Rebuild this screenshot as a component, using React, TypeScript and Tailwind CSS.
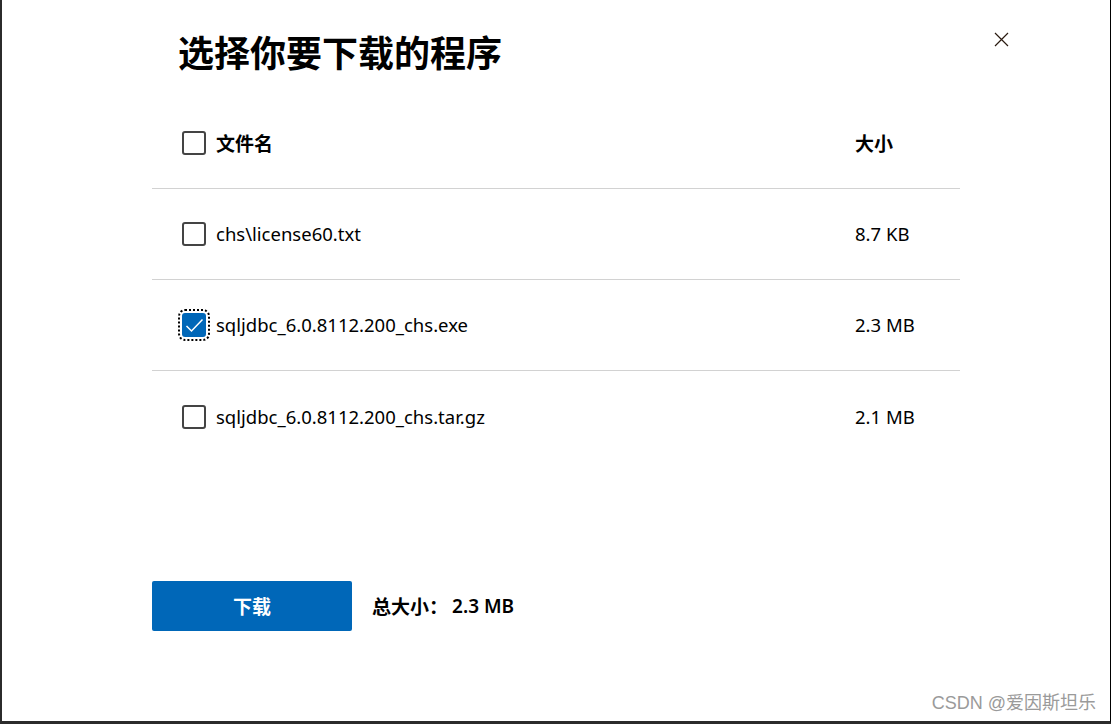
import React from 'react';

const files = [
  { name: 'chs\\license60.txt', size: '8.7 KB', checked: false },
  { name: 'sqljdbc_6.0.8112.200_chs.exe', size: '2.3 MB', checked: true },
  { name: 'sqljdbc_6.0.8112.200_chs.tar.gz', size: '2.1 MB', checked: false },
];

const font = { fontFamily: '"Noto Sans", "Noto Sans CJK SC", sans-serif' };
const cjk = { fontFamily: '"Noto Sans CJK SC", sans-serif' };

const Box = ({ checked }: { checked: boolean }) => {
  if (checked) {
    return (
      <span className="relative flex h-[24px] w-[24px] shrink-0 items-center justify-center rounded-[3px] bg-[#0067b8] outline-[2px] outline-dotted outline-black outline-offset-[2px]">
        <svg width="19" height="15" viewBox="0 0 19 15" fill="none">
          <path d="M1.5 8 L6.5 13 L17.5 1.5" stroke="white" strokeWidth="1.5" />
        </svg>
      </span>
    );
  }
  return <span className="h-[24px] w-[24px] shrink-0 rounded-[3px] border-2 border-[#444]" />;
};

export default function App() {
  return (
    <div
      className="relative h-[724px] w-[1111px] overflow-hidden border-b-[3px] border-l-2 border-r border-b-[#2b2b2b] border-l-[#2b2b2b] border-r-black bg-white text-black"
      style={font}
    >
      <button className="absolute left-[992px] top-[32px] flex h-[15px] w-[15px] items-center justify-center">
        <svg width="15" height="15" viewBox="0 0 15 15" fill="none">
          <path d="M1 1 L14 14 M14 1 L1 14" stroke="#2a1a10" strokeWidth="1.2" />
        </svg>
      </button>

      <div className="ml-[150px] w-[808px]">
        <h1 className="pl-[26px] pt-[27px] text-[36px] font-bold leading-[48px]" style={cjk}>
          选择你要下载的程序
        </h1>

        <div className="mt-[23px]">
          <div className="flex h-[91px] items-center border-b border-[#d2d2d2] pl-[30px]">
            <div className="flex flex-1 items-center gap-[10px]">
              <Box checked={false} />
              <span className="text-[19px] font-bold" style={cjk}>
                文件名
              </span>
            </div>
            <div className="w-[105px] text-[19px] font-bold" style={cjk}>
              大小
            </div>
          </div>

          {files.map((f, i) => (
            <div
              key={f.name}
              className={`flex h-[91px] items-center pl-[30px] ${i < files.length - 1 ? 'border-b border-[#d2d2d2]' : ''}`}
            >
              <div className="flex flex-1 items-center gap-[10px]">
                <Box checked={f.checked} />
                <span className="text-[18.5px]">{f.name}</span>
              </div>
              <div className="w-[105px] text-[18.5px]">{f.size}</div>
            </div>
          ))}
        </div>

        <div className="mt-[119px] flex items-center gap-[20px]">
          <button
            className="flex h-[50px] w-[200px] items-center justify-center rounded-[2px] bg-[#0067b8] text-[19px] font-bold text-white"
            style={cjk}
          >
            下载
          </button>
          <span className="flex items-center">
            <span className="text-[19px] font-bold" style={cjk}>总大小：</span>
            <span className="ml-[4px] text-[19px] font-semibold">2.3 MB</span>
          </span>
        </div>
      </div>

      <div
        className="absolute bottom-[4px] right-[14px] text-[18px] text-[#9a9a9a]"
        style={{ fontFamily: '"Liberation Sans", "Noto Sans CJK SC", sans-serif' }}
      >
        CSDN @爱因斯坦乐
      </div>
    </div>
  );
}
